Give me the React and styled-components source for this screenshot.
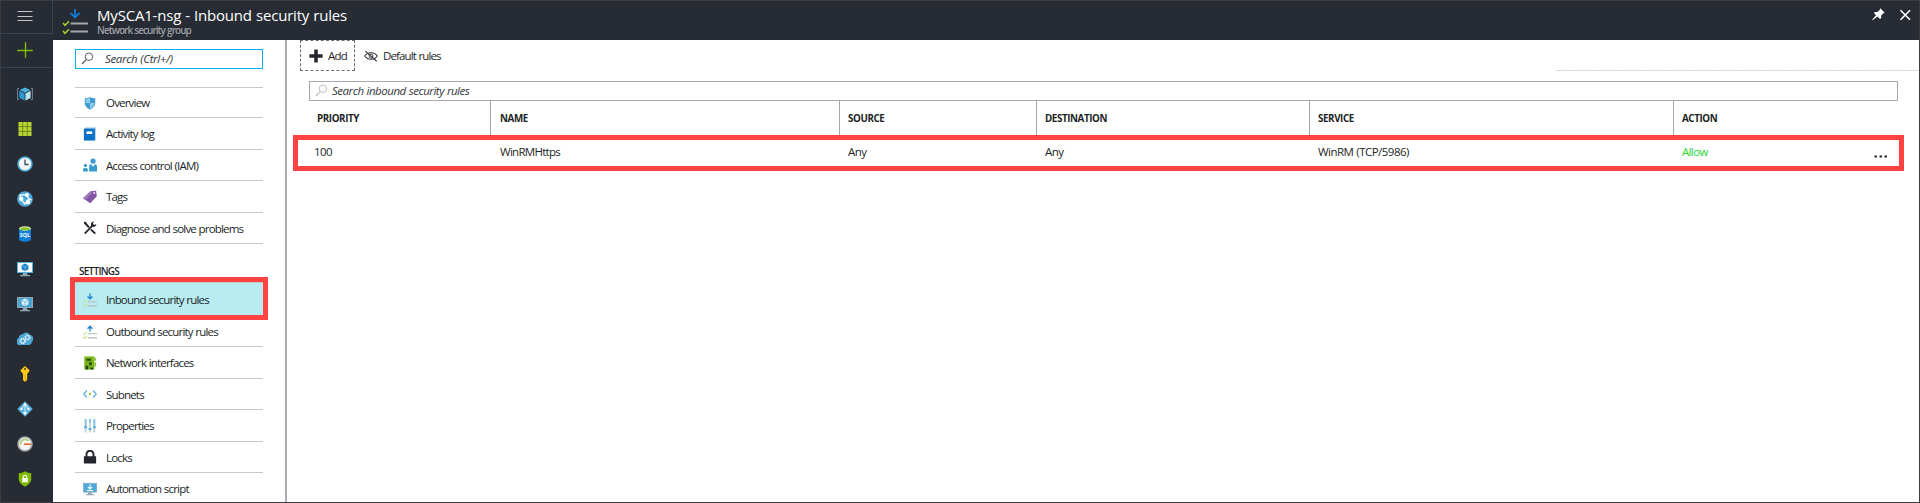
import React from "react";
import styled, { createGlobalStyle } from "styled-components";

const Global = createGlobalStyle`
  * { box-sizing: border-box; }
  body { margin: 0; background: #fff; }
`;

const Frame = styled.div`
  display: flex;
  width: 1920px;
  height: 503px;
  overflow: hidden;
  border: 1px solid #3c3c40;
  background: #fff;
  color: #1c1f26;
  font-family: "Open Sans", "Noto Sans", sans-serif;
  font-size: 11.5px;
`;

const Label = styled.span`
  white-space: nowrap;
  letter-spacing: ${(p) => p.$track ?? -0.81}px;
  word-spacing: 0.4px;
`;

/* Left icon rail */
const Rail = styled.nav`
  flex: none;
  width: 52px;
  background: #272b33;
`;
const RailButton = styled.div`
  display: flex;
  align-items: center;
  justify-content: center;
  height: ${(p) => p.$h}px;
  padding: 0 3px 2px 0;
  border-bottom: 1px solid #3b444d;
  border-right: 1px solid ${(p) => (p.$edge ? "#3b444d" : "transparent")};
`;
const RailList = styled.div`
  display: flex;
  flex-direction: column;
  padding-top: 8px;
`;
const RailItem = styled.div`
  display: flex;
  align-items: center;
  justify-content: center;
  height: 35px;
  padding: 1px 4px 0 0;
`;

/* Blade */
const Blade = styled.div`
  flex: 1;
  min-width: 0;
  display: flex;
  flex-direction: column;
`;
const TitleBar = styled.header`
  flex: none;
  display: flex;
  height: 39px;
  padding: 7px 7px 0 9px;
  background: #272b33;
`;
const Titles = styled.div`
  flex: 1;
  display: flex;
  flex-direction: column;
  padding-left: 8px;
`;
const Title = styled(Label)`
  margin-top: -4px;
  font-size: 15px;
  line-height: 22px;
  color: #fff;
`;
const Subtitle = styled(Label)`
  margin-top: -3px;
  font-size: 10px;
  line-height: 14px;
  font-weight: 600;
  color: #9b9ea3;
`;
const WindowButtons = styled.div`
  display: flex;
  gap: 14px;
`;
const Body = styled.div`
  flex: 1;
  min-height: 0;
  display: flex;
`;

/* Resource menu */
const Sidebar = styled.aside`
  flex: none;
  width: 234px;
  padding: 9px 22px 0 22px;
  border-right: 2px solid #b0acb3;
  overflow: hidden;
`;
const SearchBox = styled.div`
  display: flex;
  align-items: center;
  gap: ${(p) => p.$gap}px;
  height: 20px;
  padding: 0 0 2px ${(p) => p.$pad}px;
  border: 1px solid ${(p) => p.$line};
  color: #33363c;
  font-style: italic;
`;
const Menu = styled.div`
  display: flex;
  flex-direction: column;
  margin-top: ${(p) => p.$gap}px;
  border-top: 1px solid #c8c8c4;
`;
const MenuItem = styled.div`
  flex: none;
  display: flex;
  align-items: center;
  gap: 9px;
  height: ${(p) => p.$h}px;
  padding: ${(p) => p.$drop ?? 0}px 0 0 8px;
  border-bottom: 1px solid ${(p) => (p.$selected ? "#b8ecf1" : "#c8c8c4")};
  background: ${(p) => (p.$selected ? "#b8ecf1" : "none")};
`;
const Highlight = styled.div`
  margin-top: -1px;
  padding-top: 1px;
  outline: 5px solid #ff4343;
`;
const GroupTitle = styled.div`
  height: 15px;
  margin-top: 19px;
  padding: 1px 0 0 4px;
  font-size: 10px;
  line-height: 15px;
  font-weight: 600;
`;

/* Rules pane */
const Main = styled.main`
  flex: 1;
  min-width: 0;
  display: flex;
  flex-direction: column;
`;
const Toolbar = styled.div`
  flex: none;
  display: flex;
  height: 31px;
  padding-left: 13px;
`;
const Command = styled.div`
  display: flex;
  align-items: center;
  width: ${(p) => p.$w}px;
  padding-left: 8px;
  gap: 5px;
  border: 1px dashed ${(p) => (p.$focused ? "#6f6a72" : "transparent")};
`;
const ToolbarRule = styled.div`
  align-self: flex-end;
  height: 1px;
  width: 363px;
  background: repeating-linear-gradient(90deg, #d2d2cc 0 2px, #ececea 2px 3px);
`;
const SearchRow = styled.div`
  padding: 10px 21px 0 22px;
`;
const HeadRow = styled.div`
  flex: none;
  display: grid;
  grid-template-columns: 182px 349px 197px 273px 364px 1fr;
  height: 34px;
  margin: 0 21px 0 22px;
`;
const HeadCell = styled.div`
  display: flex;
  align-items: center;
  padding: 1px 0 0 ${(p) => (p.$wide ? 9 : 8)}px;
  font-size: 9.8px;
  font-weight: 700;
  border-right: 1px solid ${(p) => (p.$last ? "transparent" : "#aaa6ae")};
`;
const RuleRow = styled.div`
  flex: none;
  display: grid;
  grid-template-columns: 193px 349px 197px 273px 364px 1fr;
  align-items: start;
  height: 36px;
  margin: 0 15px 0 6px;
  padding-right: 11px;
  border: 5px solid #ff4343;
`;
const Cell = styled.div`
  display: flex;
  align-items: center;
  justify-content: space-between;
  height: 22px;
  padding-left: ${(p) => p.$pad ?? 8}px;
  color: ${(p) => p.$color ?? "inherit"};
`;

const Svg = ({ w = 16, h = w, box = "0 0 16 16", children }) => (
  <svg width={w} height={h} viewBox={box} fill="none">{children}</svg>
);

const Magnifier = ({ color }) => (
  <Svg w={13}>
    <circle cx="9.8" cy="5.8" r="4.6" stroke={color} strokeWidth="1.2" />
    <path d="M6.4 9.3L1.2 14.8" stroke={color} strokeWidth="1.5" />
  </Svg>
);

const Monitor = ({ screen, frame, children, w = 16 }) => (
  <Svg w={w}>
    <rect x="0.5" y="1.5" width="15" height="10" fill={screen} stroke={frame} />
    <path d="M6 12h4l.6 2H13v1.2H3V14h2.4z" fill="#8fa7b5" />
    {children}
  </Svg>
);

const RulesArrow = ({ up }) => (
  <Svg w={14}>
    <path d={up ? "M8 7.5V1.6M5.2 4.2L8 1.4l2.8 2.8" : "M8 0.5v6M5.2 3.9L8 6.7l2.8-2.8"} stroke="#1b83cf" strokeWidth="1.5" />
    <path d="M5.5 10H16M5.5 14.6H16" stroke="#b3babd" strokeWidth="1.4" />
    <path d="M.5 9.5l1.4 1.4 2.4-2.6M.5 14l1.4 1.4 2.4-2.6" stroke="#c3de8a" strokeWidth="1.2" />
  </Svg>
);

const railIcons = [
  <Svg key="cube">
    <path d="M8 1.5l5.400 2.600L8 6.800 2.600 4.100z" fill="#48b0dc" />
    <path d="M2.400 4.800l5.200 2.600v7.200L2.400 12z" fill="#2c9ad4" />
    <path d="M13.600 4.800L8.400 7.400v7.200l5.200-2.600z" fill="#b9e2f4" />
    <path d="M2 2.500H.6v11H2M14 2.500h1.400v11H14" stroke="#6f8c9b" strokeWidth="1" />
  </Svg>,
  <Svg key="grid">
    <path d="M1.5 1h13v14h-13z" fill="#b8d432" />
    <path d="M1.5 5.6h13M1.5 10.4h13M5.7 1v14M10.3 1v14" stroke="#5e7716" strokeWidth="0.8" />
  </Svg>,
  <Svg key="clock">
    <circle cx="8" cy="8" r="7" fill="#f4f7f9" stroke="#4aa5d4" strokeWidth="1.6" />
    <path d="M8 3.500v5h3.600" stroke="#3a4a58" strokeWidth="1.3" />
  </Svg>,
  <Svg key="globe">
    <circle cx="8" cy="8" r="7.8" fill="#4ea9d9" />
    <path d="M3 4.2l6.5-.6L12 8l-4.500 4.800L4.500 8.500zM7.500 12.800l5.500-1M12 8l2.500 1" stroke="#e8f5fb" strokeWidth="1.4" />
    <circle cx="4.2" cy="8" r="2.2" fill="#fff" />
    <circle cx="10" cy="4" r="1.9" fill="#fff" />
    <circle cx="11" cy="11" r="2.2" fill="#fff" />
  </Svg>,
  <Svg key="sql">
    <path d="M2 2.500v11c0 1.200 2.700 2.200 6 2.200s6-1 6-2.200v-11z" fill="#0f7ed8" />
    <ellipse cx="8" cy="2.5" rx="6" ry="2.2" fill="#e8f0d4" />
    <ellipse cx="8" cy="2.7" rx="5" ry="1.5" fill="#8fc31f" />
    <text x="8" y="11.2" textAnchor="middle" fontSize="5.4" fontWeight="700" fill="#fff" fontFamily="Open Sans, sans-serif">SQL</text>
  </Svg>,
  <Monitor key="vm" screen="#f6fbfd" frame="#57b1dd">
    <path d="M8 2.600l3.400 1.700v3.900L8 10.200 4.600 8.200V4.300z" fill="#1c7fc6" />
    <path d="M4.800 4.400L8 6l3.200-1.600M8 6v4" stroke="#9fd3f0" strokeWidth=".6" />
  </Monitor>,
  <Monitor key="vmc" screen="#4aa5d2" frame="#93a6b0">
    <path d="M8 2.600l3.400 1.700v3.900L8 10.200 4.600 8.200V4.300z" fill="#e2f3fa" />
    <path d="M4.800 4.400L8 6l3.200-1.600M8 6v4" stroke="#64b4da" strokeWidth=".8" />
  </Monitor>,
  <Svg key="cloud">
    <path d="M3.500 14A3.400 3.400 0 0 1 1.800 7.300 3.500 3.500 0 0 1 5.500 3.300 4.300 4.300 0 0 1 13 4a3.700 3.700 0 0 1 1.800 6.700A3.200 3.200 0 0 1 11 14z" fill="#4ba6d4" />
    <circle cx="5.8" cy="10" r="2.3" stroke="#dff1f8" strokeWidth="1.8" strokeDasharray="1.5 .4" />
    <circle cx="10.5" cy="6.5" r="2.1" stroke="#dff1f8" strokeWidth="1.7" strokeDasharray="1.5 .4" />
  </Svg>,
  <Svg key="key">
    <path d="M8 0L12.800 4.500 10.200 8v5.800L8 16l-2-2V8L3.200 4.500z" fill="#fbc916" />
    <circle cx="8" cy="3" r="1.1" fill="#5b4b12" />
    <path d="M8.200 8.500v6" stroke="#e8ae12" strokeWidth="1" />
  </Svg>,
  <Svg key="diamond">
    <path d="M8 .2L15.800 8 8 15.800.2 8z" fill="#55b0df" />
    <path d="M8 3v10M8 3L4.500 8M8 3l3.500 5M6 11l2 2 2-2" stroke="#e6f5fc" strokeWidth="1" />
    <circle cx="8" cy="3.5" r="1.3" fill="#fff" /><circle cx="4.5" cy="8" r="1.2" fill="#fff" />
    <circle cx="11.5" cy="8" r="1.2" fill="#fff" /><circle cx="8" cy="12.5" r="1.3" fill="#fff" />
  </Svg>,
  <Svg key="gauge">
    <circle cx="8" cy="8" r="7" fill="#f4f5f4" stroke="#a2a5a7" strokeWidth="1.6" />
    <path d="M3.500 8.500A4.600 4.600 0 0 1 11.500 5" stroke="#8dbb45" strokeWidth="1.6" strokeDasharray="1.7 .6" />
    <path d="M7 8.200h7" stroke="#e5702a" strokeWidth="1.7" />
  </Svg>,
  <Svg key="shield">
    <path d="M8 .3c2 1.400 4 1.800 6.200 1.800v6c0 3.700-3 6-6.200 7.600-3.200-1.600-6.200-3.900-6.200-7.600v-6C4 2.100 6 1.700 8 .3z" fill="#7fb900" />
    <path d="M6.300 7.500V5.900a1.700 1.700 0 0 1 3.400 0v1.600" stroke="#fff" strokeWidth="1.1" />
    <rect x="5.2" y="7" width="5.6" height="4.3" fill="#fff" />
  </Svg>,
];

const generalItems = [
  { h: 30, text: "Overview", icon: (
    <Svg w={14}>
      <path d="M8 1c2 1.200 4 1.600 6 1.600V8c0 3.600-3 6-6 7.600C5 14 2 11.600 2 8V2.600C4 2.600 6 2.200 8 1z" fill="#3f9bd0" />
      <path d="M8 2v6H3V3.400C5 3.300 6.500 3 8 2zM8 8h5.200c-.2 3-2.700 5-5.200 6.600z" fill="#8ccbe9" />
    </Svg>) },
  { h: 32, text: "Activity log", icon: (
    <Svg w={14}>
      <path d="M1.500 2.500l1-2h12v14l-1 1z" fill="#7fc0e6" />
      <path d="M1 2h12.500v13.500H1z" fill="#0c72c6" />
      <path d="M4 5h6.500v3H4z" fill="#fff" />
    </Svg>) },
  { h: 31, text: "Access control (IAM)", icon: (
    <Svg w={14}>
      <circle cx="11.5" cy="3.5" r="3" fill="#3a9ccc" />
      <path d="M7 15.500V9.500c0-1.500 1-2 2-2h.8L11.500 10l1.700-2.500h.8c1.200 0 2 .7 2 2v6z" fill="#3a9ccc" />
      <circle cx="2.8" cy="8.5" r="1.8" fill="#3a9ccc" />
      <path d="M0 15.500v-3.300L2.800 11l2.700 1.200v3.300z" fill="#3a9ccc" />
    </Svg>) },
  { h: 32, text: "Tags", icon: (
    <Svg w={14}>
      <path d="M8.500 1.500L15 .8l.8 6.200-7.500 8.200L0 9.500z" fill="#8454a6" />
      <path d="M8 2L0 9.500l2.500 2L10.500 3z" fill="#a07cbc" />
      <circle cx="12.8" cy="3.5" r="1.2" fill="#e9dff0" />
    </Svg>) },
  { h: 31, text: "Diagnose and solve problems", icon: (
    <Svg w={14}>
      <path d="M2 2l4.800 5.200M9 9.500l5 5" stroke="#23262c" strokeWidth="2.2" />
      <path d="M2 14.500l9-9.500" stroke="#23262c" strokeWidth="2" />
      <path d="M15.200 3.500a3.300 3.300 0 0 1-4.700 3 3.300 3.300 0 0 1-1.300-3.800A3.300 3.300 0 0 1 12.500.6L11.300 3l1.500 1.500z" fill="#23262c" />
      <path d="M.8 1.500L2.500.5l2 2-1.600 1.800z" fill="#23262c" />
    </Svg>) },
];

const settingsItems = [
  { h: 32, drop: 2, text: "Outbound security rules", icon: <RulesArrow up /> },
  { h: 32, text: "Network interfaces", icon: (
    <Svg w={14}>
      <path d="M1.500 .5h11.500v15H1.500z" fill="#78b51a" />
      <path d="M4 3h5v2.500H4zM7 7h3v3.500H7zM3 11h3v4.500H3zM8.500 13h3v2.500h-3z" fill="#26420f" />
      <path d="M13 2h2v3.500h-2zM13 7h2v5h-2z" fill="#8fc03c" />
    </Svg>) },
  { h: 31, text: "Subnets", icon: (
    <Svg w={14}>
      <path d="M4.500 4L.8 8l3.700 4M11.500 4l3.700 4-3.700 4" stroke="#55aedb" strokeWidth="1.3" />
      <circle cx="8" cy="8" r="1.2" fill="#7fba00" />
    </Svg>) },
  { h: 32, text: "Properties", icon: (
    <Svg w={14}>
      <path d="M3 .5v15M8 .5v15M13 .5v15" stroke="#b5c6cf" strokeWidth="1.6" />
      <path d="M3 0v9M8 0v4M13 0v9" stroke="#7fc1e2" strokeWidth="2" />
      <path d="M1.300 9.500h3.400M6.300 11.500h3.400M11.300 9.500h3.400" stroke="#5fb0d9" strokeWidth="2.4" />
    </Svg>) },
  { h: 31, text: "Locks", icon: (
    <Svg w={14}>
      <path d="M4 8V4.800a4 4 0 0 1 8 0V8" stroke="#23262c" strokeWidth="2.2" />
      <rect x="1" y="7" width="14" height="8.5" rx=".6" fill="#23262c" />
    </Svg>) },
  { h: 32, text: "Automation script", icon: (
    <Monitor w={14} screen="#4aa9d8" frame="#8badbf">
      <path d="M8 2.500v5M5.500 5.500L8 8l2.500-2.500M4.500 9.700h7" stroke="#fff" strokeWidth="1.2" />
    </Monitor>) },
];

const heads = ["PRIORITY", "NAME", "SOURCE", "DESTINATION", "SERVICE", "ACTION"];

const Item = ({ item }) => (
  <MenuItem $h={item.h} $drop={item.drop}>
    {item.icon}
    <Label>{item.text}</Label>
  </MenuItem>
);

export default function App() {
  return (
    <Frame>
      <Global />
      <Rail>
        <RailButton $h={33} $edge>
          <Svg w={16}><path d="M.5 3.500h15M.5 8.500h15M.5 12.500h15" stroke="#c3c5c8" strokeWidth="1.2" /></Svg>
        </RailButton>
        <RailButton $h={34}>
          <Svg w={16}><path d="M8.500 .2v15.600M.2 8.500h15.600" stroke="#7fba00" strokeWidth="1.4" /></Svg>
        </RailButton>
        <RailList>
          {railIcons.map((icon) => <RailItem key={icon.key}>{icon}</RailItem>)}
        </RailList>
      </Rail>
      <Blade>
        <TitleBar>
          <Svg w={27} h={27} box="0 0 27 27">
            <path d="M13 1v8M8.500 5l4.500 4.500L17.500 5" stroke="#1478cc" strokeWidth="1.8" />
            <path d="M8.500 15.500H26M8.500 23.500H26" stroke="#a5a7aa" strokeWidth="2" />
            <path d="M1 15l2 2.300 4-4M1 23l2 2.300 4-4" stroke="#a9cf2b" strokeWidth="1.6" />
          </Svg>
          <Titles>
            <Title $track={-0.19}>MySCA1-nsg - Inbound security rules</Title>
            <Subtitle $track={-0.95}>Network security group</Subtitle>
          </Titles>
          <WindowButtons>
            <Svg w={13} h={13} box="0 0 13 13">
              <path d="M8.300.3l4.400 4.400-1.300.6-2.300 2.500.1 2.300-1.200.8-2.500-2.500L.6 12.300 0 12l4-4.700L2 5l.9-1 2.500.1L7.800 1.700z" fill="#fff" />
            </Svg>
            <Svg w={13} h={13} box="0 0 13 13">
              <path d="M1.500 2.200l9.500 9.500M11 2.200l-9.500 9.500" stroke="#fff" strokeWidth="1.6" />
            </Svg>
          </WindowButtons>
        </TitleBar>
        <Body>
          <Sidebar>
            <SearchBox $pad={5} $gap={11} $line="#00b4f0">
              <Magnifier color="#55585e" />
              <Label $track={-0.35}>Search (Ctrl+/)</Label>
            </SearchBox>
            <Menu $gap={18}>
              {generalItems.map((it) => <Item key={it.text} item={it} />)}
            </Menu>
            <GroupTitle><Label $track={-0.75}>SETTINGS</Label></GroupTitle>
            <Menu $gap={4}>
              <Highlight>
                <MenuItem $h={32} $drop={2} $selected>
                  <RulesArrow />
                  <Label>Inbound security rules</Label>
                </MenuItem>
              </Highlight>
              {settingsItems.map((it) => <Item key={it.text} item={it} />)}
            </Menu>
          </Sidebar>
          <Main>
            <Toolbar>
              <Command $w={55} $focused>
                <Svg w={14}><path d="M8 .5v15M.5 8h15" stroke="#23262c" strokeWidth="4" /></Svg>
                <Label>Add</Label>
              </Command>
              <Command $w={1201}>
                <Svg w={14}>
                  <path d="M.8 8C4 3 12 3 15.200 8 12 13 4 13 .8 8z" stroke="#33363c" strokeWidth="1.2" />
                  <circle cx="8" cy="8" r="2.2" stroke="#33363c" strokeWidth="1" />
                  <path d="M1.500 2.500l13 11.500" stroke="#33363c" strokeWidth="1.3" />
                </Svg>
                <Label $track={-0.88}>Default rules</Label>
              </Command>
              <ToolbarRule />
            </Toolbar>
            <SearchRow>
              <SearchBox $pad={5} $gap={4} $line="#aaa6ae">
                <Magnifier color="#b9bcbc" />
                <Label $track={-0.47}>Search inbound security rules</Label>
              </SearchBox>
            </SearchRow>
            <HeadRow>
              {heads.map((h, i) => (
                <HeadCell key={h} $wide={i === 1} $last={i === heads.length - 1}><Label $track={-0.4}>{h}</Label></HeadCell>
              ))}
            </HeadRow>
            <RuleRow>
              <Cell $pad={16}><Label $track={-0.6}>100</Label></Cell>
              <Cell $pad={9}><Label $track={-0.72}>WinRMHttps</Label></Cell>
              <Cell><Label $track={-0.5}>Any</Label></Cell>
              <Cell><Label $track={-0.5}>Any</Label></Cell>
              <Cell><Label $track={-0.52}>WinRM (TCP/5986)</Label></Cell>
              <Cell $color="#1fd43a">
                <Label $track={-0.65}>Allow</Label>
                <Svg w={14} h={14} box="0 0 14 14"><path d="M.5 11.500h2.500v2H.5zM5.500 11.500H8v2H5.500zM10.500 11.500H13v2h-2.500z" fill="#23262c" /></Svg>
              </Cell>
            </RuleRow>
          </Main>
        </Body>
      </Blade>
    </Frame>
  );
}
